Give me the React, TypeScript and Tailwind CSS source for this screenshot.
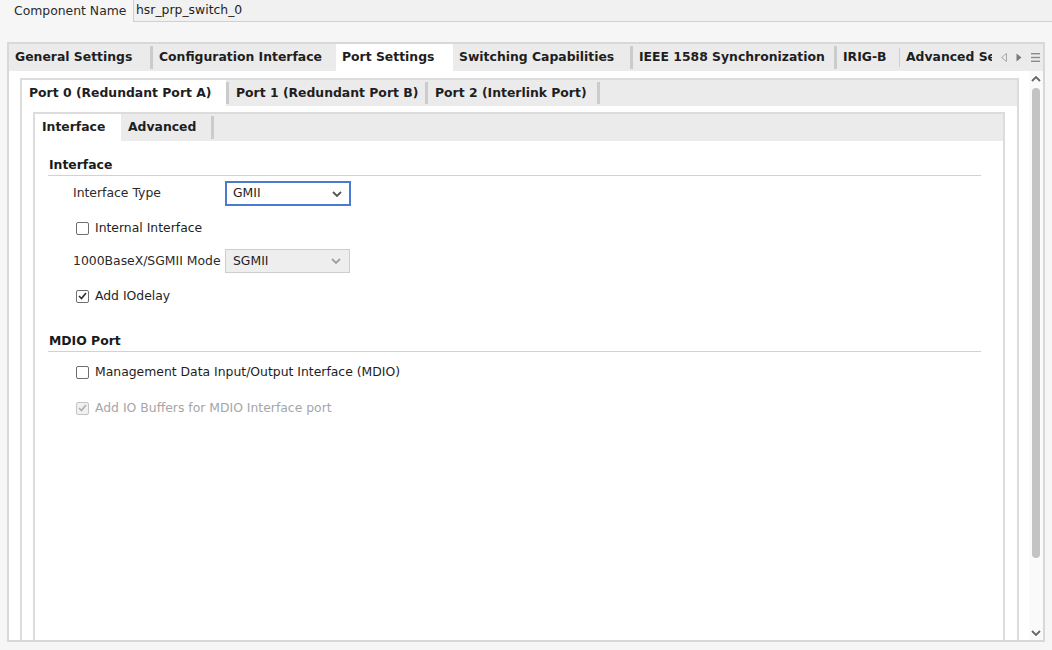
import { useState } from 'react';

const outerTabs = [
  { label: 'General Settings', w: 'w-[141px]' },
  { label: 'Configuration Interface', w: 'w-[183px]' },
  { label: 'Port Settings', w: 'w-[117px]', active: true },
  { label: 'Switching Capabilities', w: 'w-[177px]' },
  { label: 'IEEE 1588 Synchronization', w: 'w-[201px]' },
  { label: 'IRIG-B', w: 'w-[62px]' },
];

const portTabs = [
  { label: 'Port 0 (Redundant Port A)', w: 'w-[204px]', active: true },
  { label: 'Port 1 (Redundant Port B)', w: 'w-[196px]' },
  { label: 'Port 2 (Interlink Port)', w: 'w-[169px]' },
];

function Sep({ thin }: { thin?: boolean }) {
  return <div className={thin ? 'my-[4px] w-px shrink-0 bg-[#cfcfcf]' : 'my-[2px] w-[3px] shrink-0 bg-[#cbcbcb]'} />;
}

function Chevron({ color = '#555' }: { color?: string }) {
  return (
    <svg width="10" height="6" viewBox="0 0 10 6" className="shrink-0">
      <polyline points="1,1 5,5 9,1" fill="none" stroke={color} strokeWidth="1.8" />
    </svg>
  );
}

function Checkbox({ checked, disabled, label, onClick }: { checked: boolean; disabled?: boolean; label: string; onClick?: () => void }) {
  return (
    <div className="flex h-[20px] items-center pl-[28px]" onClick={disabled ? undefined : onClick}>
      <div
        className={
          'flex h-[13px] w-[13px] shrink-0 items-center justify-center rounded-[2px] border ' +
          (disabled ? 'border-[#c4c4c4] bg-[#f1f1f1]' : 'border-[#6e6e6e] bg-white')
        }
      >
        {checked && (
          <svg width="9" height="8" viewBox="0 0 9 8">
            <polyline points="1,4 3.5,6.5 8,1" fill="none" stroke={disabled ? '#b0b0b0' : '#333'} strokeWidth="1.7" />
          </svg>
        )}
      </div>
      <span className={'ml-[6px] ' + (disabled ? 'text-[#a6a6a6]' : 'text-[#1e1e1e]')}>{label}</span>
    </div>
  );
}

function Heading({ title }: { title: string }) {
  return (
    <div>
      <div className="h-[20px] pl-[1px] font-bold leading-[20px] text-[#1a1a1a]">{title}</div>
      <div className="h-px bg-[#d2d2d2]" />
    </div>
  );
}

export default function App() {
  const [internal, setInternal] = useState(false);
  const [iodelay, setIodelay] = useState(true);
  const [mdio, setMdio] = useState(false);

  return (
    <div className="h-[650px] w-[1052px] overflow-hidden bg-[#f6f6f6] font-['DejaVu_Sans',sans-serif] text-[12.4px] text-[#1e1e1e]">
      {/* Component name */}
      <div className="flex h-[22px] items-center">
        <div className="w-[133px] shrink-0 pl-[14px] text-[#2a2a2a]">Component Name</div>
        <div className="flex h-[22px] flex-1 items-center border border-r-0 border-t-0 border-[#d0d0d0] bg-[#f1f1f1] pl-[2px]">
          hsr_prp_switch_0
        </div>
      </div>

      {/* Outer tab panel */}
      <div className="ml-[7px] mt-[20px] flex h-[600px] w-[1038px] flex-col border-2 border-[#d8d8d8]">
        <div className="flex h-[27px] shrink-0 bg-[#ebebeb] font-bold">
          {outerTabs.map((t, i) => (
            <div key={t.label} className="flex">
              <div className={'flex items-center pl-[6px] ' + t.w + (t.active ? ' bg-white' : '')}>{t.label}</div>
              {i < outerTabs.length - 1 && !t.active && !outerTabs[i + 1].active && <Sep />}
              {i === outerTabs.length - 1 && <Sep thin />}
            </div>
          ))}
          <div className="flex w-[92px] items-center overflow-hidden whitespace-nowrap pl-[6px]">Advanced Settings</div>
          <div className="flex flex-1 items-center justify-end gap-[9px] pr-[3px]">
            <svg width="6" height="9" viewBox="0 0 6 9">
              <polygon points="5.5,0.5 0.5,4.5 5.5,8.5" fill="none" stroke="#a8a8a8" strokeWidth="1" />
            </svg>
            <svg width="6" height="9" viewBox="0 0 6 9">
              <polygon points="0.5,0.5 5.5,4.5 0.5,8.5" fill="#7a7a7a" />
            </svg>
            <svg width="9" height="9" viewBox="0 0 9 9">
              <rect x="0" y="0" width="9" height="1.4" fill="#8a8a8a" />
              <rect x="0" y="3.8" width="9" height="1.4" fill="#8a8a8a" />
              <rect x="0" y="7.6" width="9" height="1.4" fill="#8a8a8a" />
            </svg>
          </div>
        </div>

        {/* Scroll pane */}
        <div className="flex min-h-0 flex-1 bg-white">
          <div className="flex min-w-0 flex-1 flex-col pl-[11px] pr-[10px] pt-[7px]">
            {/* Port tab panel */}
            <div className="flex flex-1 flex-col border-2 border-b-0 border-[#dcdcdc]">
              <div className="flex h-[26px] shrink-0 bg-[#ebebeb] font-bold">
                {portTabs.map((t) => (
                  <div key={t.label} className="flex">
                    <div className={'flex items-center pl-[7px] ' + t.w + (t.active ? ' bg-white' : '')}>{t.label}</div>
                    <Sep />
                  </div>
                ))}
              </div>
              <div className="flex flex-1 flex-col bg-white pl-[11px] pr-[12px] pt-[6px]">
                {/* Interface tab panel */}
                <div className="flex flex-1 flex-col border-2 border-b-0 border-[#dcdcdc]">
                  <div className="flex h-[27px] shrink-0 bg-[#ebebeb] font-bold">
                    <div className="flex w-[86px] items-center bg-white pl-[7px]">Interface</div>
                    <div className="flex w-[90px] items-center pl-[7px]">Advanced</div>
                    <Sep />
                  </div>
                  <div className="flex flex-1 flex-col bg-white pl-[13px] pr-[22px] pt-[14px]">
                    <Heading title="Interface" />
                    <div className="mt-[5px] flex h-[25px] items-center">
                      <div className="w-[177px] shrink-0 pl-[25px] text-[#2a2a2a]">Interface Type</div>
                      <div className="flex h-[25px] w-[126px] items-center justify-between border-2 border-[#4a7bd0] bg-white pl-[6px] pr-[7px]">
                        <span>GMII</span>
                        <Chevron />
                      </div>
                    </div>
                    <div className="mt-[12px]">
                      <Checkbox checked={internal} label="Internal Interface" onClick={() => setInternal(!internal)} />
                    </div>
                    <div className="mt-[11px] flex h-[24px] items-center">
                      <div className="w-[177px] shrink-0 whitespace-nowrap pl-[25px] text-[#2a2a2a]">1000BaseX/SGMII Mode</div>
                      <div className="flex h-[24px] w-[125px] items-center justify-between border border-[#cdcdcd] bg-[#eeeeee] pl-[7px] pr-[8px]">
                        <span>SGMII</span>
                        <Chevron color="#a0a0a0" />
                      </div>
                    </div>
                    <div className="mt-[13px]">
                      <Checkbox checked={iodelay} label="Add IOdelay" onClick={() => setIodelay(!iodelay)} />
                    </div>
                    <div className="mt-[25px]">
                      <Heading title="MDIO Port" />
                    </div>
                    <div className="mt-[10px]">
                      <Checkbox checked={mdio} label="Management Data Input/Output Interface (MDIO)" onClick={() => setMdio(!mdio)} />
                    </div>
                    <div className="mt-[16px]">
                      <Checkbox checked disabled label="Add IO Buffers for MDIO Interface port" />
                    </div>
                  </div>
                </div>
              </div>
            </div>
          </div>

          {/* Scrollbar */}
          <div className="flex w-[14px] shrink-0 flex-col items-center bg-[#fafafa] pt-[5px] pb-[4px]">
            <svg width="10" height="6" viewBox="0 0 10 6">
              <polyline points="1,5 5,1 9,5" fill="none" stroke="#666" strokeWidth="1.8" />
            </svg>
            <div className="mt-[6px] h-[470px] w-[8px] rounded-full bg-[#c3c3c3]" />
            <div className="flex-1" />
            <Chevron color="#666" />
          </div>
        </div>
      </div>
    </div>
  );
}
